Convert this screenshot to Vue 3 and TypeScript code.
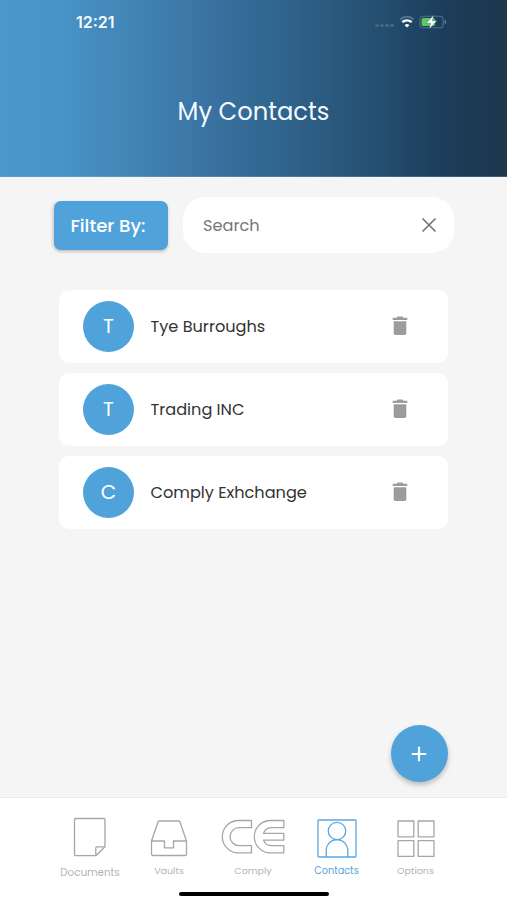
<script setup lang="ts">
import { ref } from 'vue'

interface Contact {
  id: number
  name: string
}

const contacts = ref<Contact[]>([
  { id: 1, name: 'Tye Burroughs' },
  { id: 2, name: 'Trading INC' },
  { id: 3, name: 'Comply Exhchange' },
])

const search = ref('')

function removeContact(id: number) {
  contacts.value = contacts.value.filter((c) => c.id !== id)
}
</script>

<template>
  <div class="screen">
    <header class="header">
      <div class="status">
        <span class="time">12:21</span>
        <div class="indicators">
          <span class="dots"><i v-for="n in 4" :key="n" /></span>
          <svg class="wifi" width="16" height="13" viewBox="0 0 16 13" fill="none">
            <path d="M1.2 4.4a9.8 9.8 0 0 1 13.6 0" stroke="#587a94" stroke-width="1.6" />
            <path d="M3.3 7.2a6.8 6.8 0 0 1 9.4 0" stroke="#fff" stroke-width="2.3" />
            <path d="M8 12.6 5.6 10.2a3.4 3.4 0 0 1 4.8 0z" fill="#fff" />
          </svg>
          <svg class="battery" width="28" height="14" viewBox="0 0 28 14" fill="none">
            <rect x=".8" y="1.2" width="23.4" height="11.6" rx="3.4" stroke="#4f7089" stroke-width="1.1" />
            <rect x="2.6" y="3" width="13.4" height="8" rx="1.6" fill="#5fc85f" />
            <path d="M25.6 5v4c1-.3 1.6-1.1 1.6-2s-.6-1.7-1.6-2z" fill="#64849b" />
            <path d="M14.8 0 7.2 8.200h4.400L10.200 14 18 5.800h-4.600z" fill="#fff" stroke="#24506f" stroke-width=".4" />
          </svg>
        </div>
      </div>
      <h1 class="title">My Contacts</h1>
    </header>

    <main class="content">
      <div class="tools">
        <button class="filter" type="button">Filter By:</button>
        <label class="search">
          <input v-model="search" type="text" placeholder="Search" />
          <button class="clear" type="button" @click="search = ''">
            <svg width="16" height="16" viewBox="0 0 16 16" fill="none" stroke="#777" stroke-width="1.7">
              <path d="M1.5 1.5l13 13M14.5 1.5l-13 13" />
            </svg>
          </button>
        </label>
      </div>

      <ul class="list">
        <li v-for="c in contacts" :key="c.id" class="card">
          <span class="avatar">{{ c.name.charAt(0) }}</span>
          <span class="name">{{ c.name }}</span>
          <button class="trash" type="button" @click="removeContact(c.id)">
            <svg width="16" height="20" viewBox="0 0 16 20" fill="#9c9c9c">
              <path d="M.7 1.8h3.8L5.700.6h4.600l1.200 1.200h3.800V4H.7z" />
              <path d="M1.700 5.200h12.600v12a1.800 1.800 0 0 1-1.800 1.800h-9a1.800 1.800 0 0 1-1.800-1.800z" />
            </svg>
          </button>
        </li>
      </ul>

      <button class="fab" type="button">
        <svg width="16" height="16" viewBox="0 0 16 16" stroke="#fff" stroke-width="2.2">
          <path d="M8 .8v14.400M.8 8h14.400" />
        </svg>
      </button>
    </main>

    <nav class="tabs">
      <a class="tab documents">
        <svg width="34" height="41" viewBox="0 0 34 41">
          <path d="M2.500 1.500h28.500a1 1 0 0 1 1 1v27.200l-9.200 9H2.500a1 1 0 0 1-1-1V2.500a1 1 0 0 1 1-1z" />
          <path d="M22.800 38.500v-7.600a1 1 0 0 1 1-1H32" />
        </svg>
        <span>Documents</span>
      </a>
      <a class="tab vaults">
        <svg width="38" height="38" viewBox="0 0 38 38">
          <path d="M1.500 22 8 3a1.500 1.500 0 0 1 1.400-1h19.200a1.500 1.500 0 0 1 1.400 1l6.500 19v13a1.500 1.500 0 0 1-1.500 1.500H3A1.500 1.500 0 0 1 1.500 35z" />
          <path d="M1.500 22h13v6.800h9V22h13" />
        </svg>
        <span>Vaults</span>
      </a>
      <a class="tab comply">
        <svg width="64" height="36" viewBox="0 0 64 36">
          <path d="M30.500 1.500H17.500a16.200 16.200 0 0 0 0 32.400h13v-7.200H18a9 9 0 0 1 0-18h12.500z" />
          <path d="M62.800 1.500H49.500a16.200 16.200 0 0 0 0 32.400h13.300v-7.200H50a8.500 8.500 0 0 1-7.500-5.600h20.300v-6.800H42.500A8.500 8.500 0 0 1 50 8.700h12.800z" />
        </svg>
        <span>Comply</span>
      </a>
      <a class="tab contacts active">
        <svg width="40" height="39" viewBox="0 0 40 39">
          <rect x="1" y="1" width="38" height="37" rx=".8" />
          <circle cx="20" cy="12" r="8.700" />
          <path d="M9.200 38v-6.500a10.800 10.800 0 0 1 21.600 0V38" />
        </svg>
        <span>Contacts</span>
      </a>
      <a class="tab options">
        <svg width="38" height="38" viewBox="0 0 38 38">
          <rect x="1" y="2" width="15.800" height="15.800" />
          <rect x="21.200" y="2" width="15.800" height="15.800" />
          <rect x="1" y="21.700" width="15.800" height="15.800" />
          <rect x="21.200" y="21.700" width="15.800" height="15.800" />
        </svg>
        <span>Options</span>
      </a>
      <div class="home-bar" />
    </nav>
  </div>
</template>

<style>
body {
  margin: 0;
}
</style>

<style scoped>
.screen {
  width: 507px;
  height: 900px;
  display: flex;
  flex-direction: column;
  overflow: hidden;
  background: #f5f5f5;
  font-family: Poppins, Inter, 'Noto Sans', sans-serif;
}
button {
  border: 0;
  padding: 0;
  background: none;
  font: inherit;
  display: flex;
  align-items: center;
  justify-content: center;
}
.header {
  flex: none;
  height: 177px;
  box-sizing: border-box;
  border-bottom: 1px solid rgba(160, 200, 225, 0.25);
  background: linear-gradient(90deg, #4b96ca 0, #4893c7 60px, #4286b6 125px, #3b75a5 200px, #316891 265px, #2b5a80 325px, #244d6e 385px, #1d405f 430px, #1c3a55 465px, #1b384d 507px);
  color: #f3faff;
}
.status {
  height: 43px;
  display: flex;
  align-items: center;
  justify-content: space-between;
  padding: 0 60px 0 76px;
}
.time {
  font-family: Inter, sans-serif;
  font-size: 16px;
  font-weight: 600;
}
.indicators {
  display: flex;
  align-items: center;
}
.dots {
  display: flex;
  gap: 1.5px;
  margin: 8px 5px 0 0;
}
.dots i {
  width: 3.6px;
  height: 3.6px;
  border-radius: 50%;
  background: #456781;
}
.battery {
  margin-left: 4px;
}
.title {
  margin: 54px 0 0;
  font-size: 24.2px;
  line-height: 30px;
  font-weight: 400;
  text-align: center;
}
.content {
  flex: 1;
  display: flex;
  flex-direction: column;
  padding: 20px 53px 15px 54px;
}
.tools {
  display: flex;
  align-items: center;
  gap: 15px;
}
.filter {
  flex: none;
  width: 114px;
  height: 49px;
  padding-right: 6px;
  box-sizing: border-box;
  border-radius: 7px;
  background: #50a2db;
  color: #fff;
  font-size: 18.2px;
  font-weight: 500;
  white-space: nowrap;
  box-shadow: 0 2px 3px rgba(0, 0, 0, 0.2), -3px 0 2px rgba(0, 0, 0, 0.06);
}
.search {
  flex: 1;
  min-width: 0;
  height: 56px;
  box-sizing: border-box;
  display: flex;
  align-items: center;
  padding: 0 17px 0 20px;
  border-radius: 22px;
  background: #fff;
}
.search input {
  flex: 1;
  width: 0;
  min-width: 0;
  border: 0;
  padding: 0;
  outline: 0;
  background: none;
  font: 16.2px Poppins, Inter, sans-serif;
}
.search input::placeholder {
  color: #767676;
  opacity: 1;
}
.list {
  list-style: none;
  margin: 37px 6px 0 5px;
  padding: 0;
  display: flex;
  flex-direction: column;
  gap: 10.5px;
}
.card {
  height: 72.5px;
  box-sizing: border-box;
  display: flex;
  align-items: center;
  padding: 0 40px 0 24px;
  border-radius: 10px;
  background: #fff;
}
.avatar {
  width: 51px;
  height: 51px;
  border-radius: 50%;
  display: flex;
  align-items: center;
  justify-content: center;
  background: #50a2db;
  color: #fff;
  font-size: 20px;
}
.name {
  margin-left: 16.5px;
  font-size: 16.15px;
  color: #333;
}
.trash {
  margin-left: auto;
}
.fab {
  width: 57px;
  height: 57px;
  margin: auto 6.5px 0 auto;
  border-radius: 50%;
  background: #50a2db;
  box-shadow: 0 3px 5px rgba(0, 0, 0, 0.24);
}
.tabs {
  flex: none;
  position: relative;
  height: 103px;
  box-sizing: border-box;
  padding: 0 51px 0 50px;
  border-top: 1px solid #e8e8e8;
  background: #fff;
  display: grid;
  grid-template-columns: 80px 78px 90px 77px 81px;
}
.tab {
  display: flex;
  flex-direction: column;
  align-items: center;
  padding-top: 21px;
  color: #b4b4b4;
  font-size: 9.5px;
  line-height: 14px;
  font-weight: 400;
}
.tab svg {
  fill: none;
  stroke: #a6a6a6;
  stroke-width: 1.3;
  stroke-linejoin: round;
}
.tab span {
  margin-top: auto;
  margin-bottom: 22px;
}
.documents {
  padding-top: 19px;
}
.documents span {
  margin-bottom: 20px;
  font-size: 10.3px;
}
.active {
  color: #50a2db;
}
.active span {
  font-size: 9.7px;
}
.active svg {
  stroke: #58a9df;
}
.home-bar {
  position: absolute;
  left: 179px;
  bottom: 4px;
  width: 150px;
  height: 4.5px;
  border-radius: 3px;
  background: #000;
}
</style>
